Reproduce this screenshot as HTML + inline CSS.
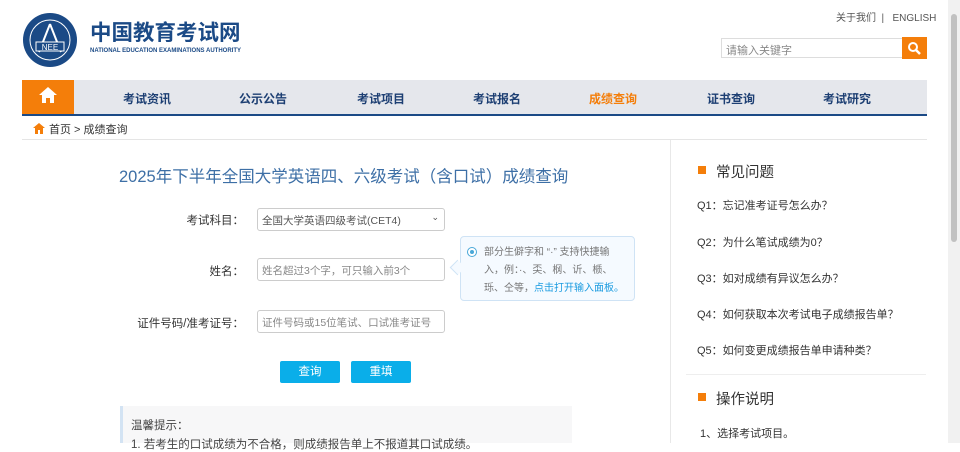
<!DOCTYPE html>
<html><head><meta charset="utf-8"><style>
*{margin:0;padding:0;box-sizing:border-box}
body{width:960px;height:443px;overflow:hidden;background:#fff;font-family:"Liberation Sans","Noto Sans CJK SC",sans-serif;position:relative;color:#333}
.a{position:absolute}
.nav span{position:absolute;top:90px;font-size:12px;font-weight:bold;color:#1d3f73;transform:translateX(-50%)}
.lbl{position:absolute;font-size:11.5px;color:#333;text-align:right;width:200px}
.inp{position:absolute;left:257px;width:188px;height:23px;border:1px solid #ccc;border-radius:3px;font-size:10.5px;color:#888;padding:4px 0 0 4px;white-space:nowrap;overflow:hidden}
.q{position:absolute;left:697px;font-size:11px;color:#333}
.btn{position:absolute;top:361px;width:60px;height:22px;background:#0aaee9;color:#fff;font-size:11.5px;text-align:center;line-height:22px;border-radius:2px}
</style></head><body>
<svg class="a" style="left:22px;top:12px" width="56" height="56" viewBox="0 0 56 56">
<circle cx="28" cy="28" r="27" fill="#1b4a86"/>
<circle cx="28" cy="28" r="20" fill="none" stroke="#fff" stroke-width="1"/>
<path d="M28 12 L17 40 M28 12 L39 40" stroke="#fff" stroke-width="2" fill="none"/>
<rect x="14" y="30" width="28" height="9" fill="#1b4a86" stroke="#fff" stroke-width="1"/>
<text x="28" y="38" font-size="8" fill="#fff" text-anchor="middle" font-family="Liberation Sans">NEE</text>
</svg>
<div class="a" style="left:90px;top:20px;font-size:21.5px;font-weight:bold;color:#1b4a86;line-height:26px">中国教育考试网</div>
<div class="a" style="left:90px;top:48px;font-size:6px;font-weight:bold;color:#1b4a86">NATIONAL EDUCATION EXAMINATIONS AUTHORITY</div>
<div class="a" style="left:836px;top:9px;font-size:10px;color:#555">关于我们 &nbsp;| &nbsp; ENGLISH</div>
<div class="a" style="left:721px;top:38px;width:182px;height:20px;border:1px solid #ddd;font-size:11px;color:#888;padding:3px 0 0 4px">请输入关键字</div>
<div class="a" style="left:902px;top:37px;width:25px;height:22px;background:#f47e0a"></div>
<svg class="a" style="left:907px;top:41px" width="14" height="14" viewBox="0 0 14 14"><circle cx="6" cy="6" r="4" fill="none" stroke="#fff" stroke-width="2"/><path d="M9 9l4 4" stroke="#fff" stroke-width="2.5"/></svg>
<div class="a" style="left:22px;top:80px;width:905px;height:34px;background:#e5e7ec"></div>
<div class="a" style="left:22px;top:114px;width:905px;height:2px;background:#1b4a86"></div>
<div class="a" style="left:22px;top:80px;width:52px;height:34px;background:#f47e0a"></div>
<svg class="a" style="left:38px;top:86px" width="20" height="18" viewBox="0 0 20 18"><path d="M10 1L1 9h3v8h4v-5h4v5h4V9h3z" fill="#fff"/></svg>
<div class="nav">
<span style="left:147px">考试资讯</span><span style="left:263px">公示公告</span><span style="left:381px">考试项目</span><span style="left:497px">考试报名</span><span style="left:613px;color:#f47e0a">成绩查询</span><span style="left:731px">证书查询</span><span style="left:847px">考试研究</span>
</div>
<svg class="a" style="left:33px;top:123px" width="12" height="11" viewBox="0 0 12 11"><path d="M6 0L0 5h2v6h3V7h2v4h3V5h2z" fill="#f47e0a"/></svg>
<div class="a" style="left:49px;top:121px;font-size:11px;color:#333">首页 &gt; 成绩查询</div>
<div class="a" style="left:22px;top:139px;width:905px;height:1px;background:#e5e5e5"></div>
<div class="a" style="left:670px;top:140px;width:1px;height:303px;background:#e8e8e8"></div>
<div class="a" style="left:119px;top:163px;font-size:16.5px;color:#3d6fa6;white-space:nowrap">2025年下半年全国大学英语四、六级考试（含口试）成绩查询</div>
<div class="lbl" style="left:44px;top:212px">考试科目：</div>
<div class="inp" style="top:208px;color:#555">全国大学英语四级考试(CET4)<span style="position:absolute;right:5px;top:3px;font-size:9px">⌄</span></div>
<div class="lbl" style="left:44px;top:263px">姓名：</div>
<div class="inp" style="top:258px">姓名超过3个字，可只输入前3个</div>
<div class="lbl" style="left:44px;top:315px">证件号码/准考证号：</div>
<div class="inp" style="top:310px">证件号码或15位笔试、口试准考证号</div>
<div class="a" style="left:460px;top:236px;width:175px;height:65px;border:1px solid #cfe3f5;background:#f5faff;border-radius:4px;font-size:10px;color:#777;line-height:18px;padding:7px 0 0 23px;white-space:nowrap">部分生僻字和 “·” 支持快捷输<br>入，例：·、奀、㭎、䜣、𬃊、<br>𬍛、仝等，<span style="color:#1a9be0">点击打开输入面板。</span></div>
<div class="a" style="left:467px;top:247px;width:10px;height:10px;border-radius:50%;border:1px solid #4aa8d8;background:#fff"></div>
<div class="a" style="left:470px;top:250px;width:4px;height:4px;border-radius:50%;background:#4aa8d8"></div>
<div class="a" style="left:452px;top:262px;width:11px;height:11px;transform:rotate(45deg);background:#f5faff;border-left:1px solid #cfe3f5;border-bottom:1px solid #cfe3f5"></div>
<div class="btn" style="left:280px">查询</div>
<div class="btn" style="left:351px">重填</div>
<div class="a" style="left:120px;top:406px;width:452px;height:37px;background:#f7f7f8;border-left:3px solid #d3e3f3"></div>
<div class="a" style="left:131px;top:417px;font-size:11.5px;color:#444">温馨提示：</div>
<div class="a" style="left:131px;top:436px;font-size:11.5px;color:#444;white-space:nowrap">1. 若考生的口试成绩为不合格，则成绩报告单上不报道其口试成绩。</div>
<div class="a" style="left:698px;top:166px;width:8px;height:8px;background:#f47e0a"></div>
<div class="a" style="left:716px;top:161px;font-size:14.5px;color:#333">常见问题</div>
<div class="q" style="top:197px">Q1：忘记准考证号怎么办？</div>
<div class="q" style="top:234px">Q2：为什么笔试成绩为0？</div>
<div class="q" style="top:270px">Q3：如对成绩有异议怎么办？</div>
<div class="q" style="top:306px">Q4：如何获取本次考试电子成绩报告单？</div>
<div class="q" style="top:342px">Q5：如何变更成绩报告单申请种类？</div>
<div class="a" style="left:686px;top:374px;width:240px;height:1px;background:#eee"></div>
<div class="a" style="left:698px;top:393px;width:8px;height:8px;background:#f47e0a"></div>
<div class="a" style="left:716px;top:388px;font-size:14.5px;color:#333">操作说明</div>
<div class="q" style="left:700px;top:425px">1、选择考试项目。</div>
<div class="a" style="left:948px;top:0;width:12px;height:443px;background:#f1f1f1"></div>
<div class="a" style="left:951px;top:14px;width:6px;height:228px;background:#c1c1c1;border-radius:3px"></div>
</body></html>
